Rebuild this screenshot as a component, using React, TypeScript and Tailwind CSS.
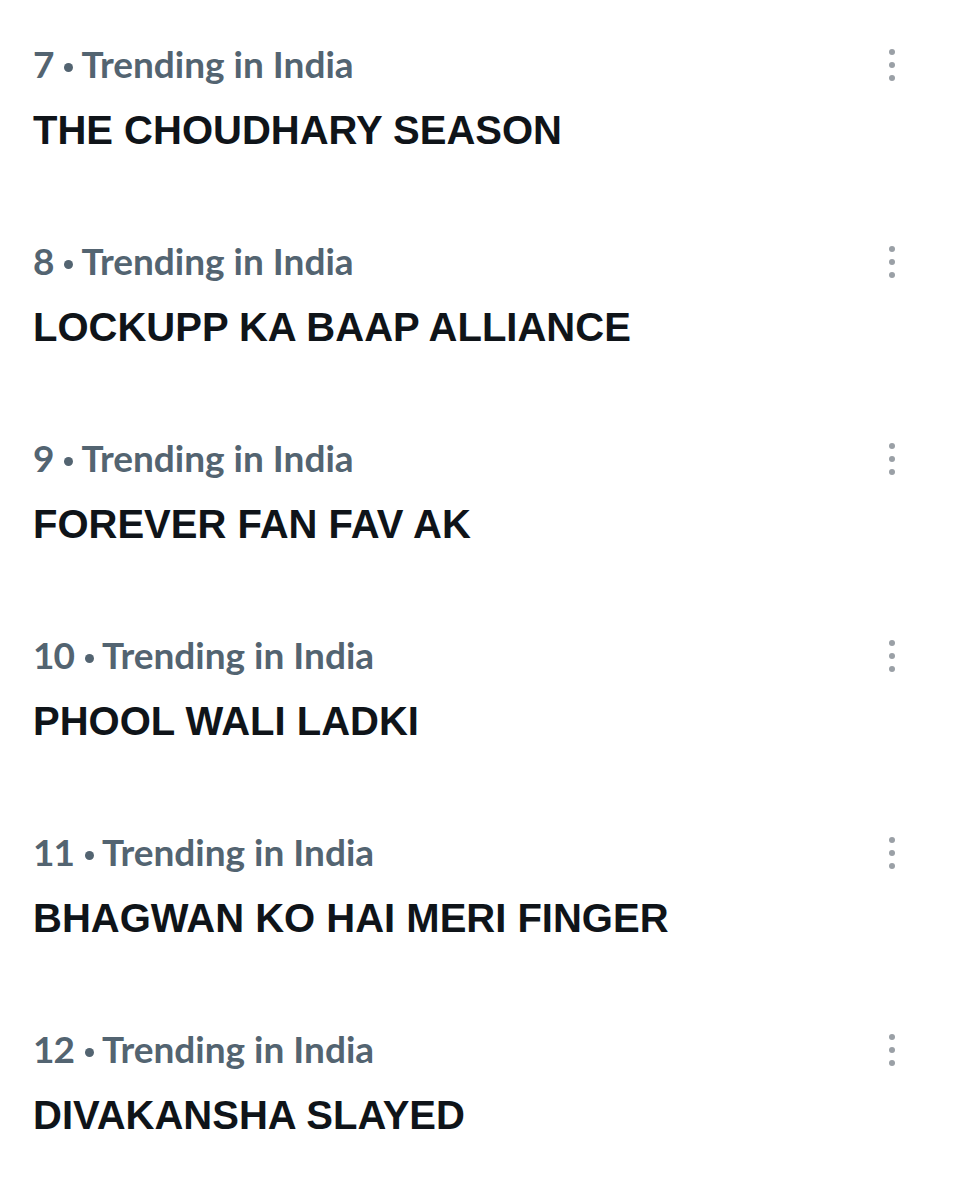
const trends = [
  { rank: 7, title: "THE CHOUDHARY SEASON" },
  { rank: 8, title: "LOCKUPP KA BAAP ALLIANCE" },
  { rank: 9, title: "FOREVER FAN FAV AK" },
  { rank: 10, title: "PHOOL WALI LADKI" },
  { rank: 11, title: "BHAGWAN KO HAI MERI FINGER" },
  { rank: 12, title: "DIVAKANSHA SLAYED" },
];

function MoreDots() {
  return (
    <svg width="12" height="36" viewBox="0 0 12 36" className="text-[#9aa0a6]" aria-hidden>
      <circle cx="6" cy="5" r="3" fill="currentColor" />
      <circle cx="6" cy="18" r="3" fill="currentColor" />
      <circle cx="6" cy="31" r="3" fill="currentColor" />
    </svg>
  );
}

function TrendRow({ rank, title }: { rank: number; title: string }) {
  return (
    <div className="relative h-[197px] pl-[33px] pt-[44px]">
      <div className="flex h-10 items-center font-['Lato',sans-serif] text-[37px] leading-10 font-bold text-[#536471]">
        <span className="tracking-[-1px]">{rank}</span>
        <span className="ml-[11px] size-[9px] translate-y-[3px] rounded-full bg-current" />
        <span className="ml-[8px]">Trending in India</span>
      </div>
      <div className="mt-[26px] h-10 font-['Liberation_Sans',Arial,sans-serif] text-[40px] leading-10 font-bold text-[#0f1419]">
        {title}
      </div>
      <button className="absolute top-[47px] left-[886px]" aria-label="More">
        <MoreDots />
      </button>
    </div>
  );
}

export default function App() {
  return (
    <div className="h-[1200px] w-[968px] overflow-hidden bg-white">
      {trends.map((t) => (
        <TrendRow key={t.rank} rank={t.rank} title={t.title} />
      ))}
    </div>
  );
}
